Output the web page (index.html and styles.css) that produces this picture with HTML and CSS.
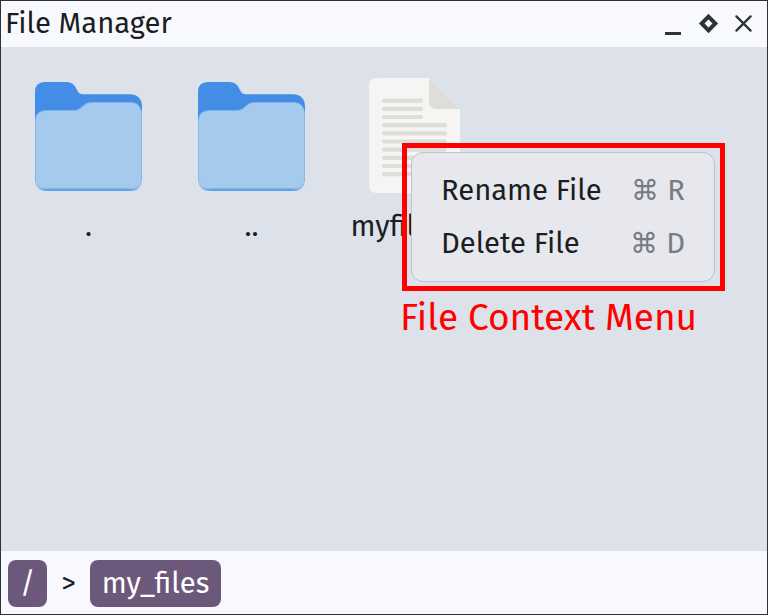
FILE: index.html
```html
<!DOCTYPE html>
<html lang="en">
<head>
<meta charset="utf-8">
<title>File Manager</title>
<link rel="stylesheet" href="styles.css">
</head>
<body>
<svg class="defs" width="0" height="0" aria-hidden="true">
  <defs>
    <linearGradient id="edge" x1="0" x2="1" y1="0" y2="0">
      <stop offset="0" stop-color="#a4caee"/><stop offset=".12" stop-color="#62a0ea"/>
      <stop offset=".88" stop-color="#62a0ea"/><stop offset="1" stop-color="#a4caee"/>
    </linearGradient>
    <symbol id="folder" viewBox="0 0 107 109">
      <path fill="#438de6" d="M10 0H31C38 0 40 4 42 8C43.500 11 45 12.300 48 12.300H95Q107 13 107 25V60H0V10Q0 0 10 0Z"/>
      <path fill="#80b3ee" d="M0 38Q1 28 11 28H39C43 28 45 26 48 23.500C51 21 53 20 57 20H97Q106 21 107 31V98Q106 109 96 109H11Q1 109 0 98Z"/>
      <path fill="url(#edge)" d="M1 90H106V98Q106 109 96 109H11Q1 109 1 98Z"/>
      <path fill="#a4caee" d="M.8 39Q1 29 11 29H39C43 29 45.500 27 48 24.600C51 22 53 21 57 21H97Q106 22 106.200 32V96Q106 106 96 106.500H11Q1 106 .8 96Z"/>
    </symbol>
  </defs>
</svg>
<main class="window">
  <header class="titlebar">
    <h1 class="title">File Manager</h1>
    <div class="controls">
      <svg width="88" height="24" viewBox="0 0 88 24" fill="none" stroke="#2e3436">
        <path stroke-width="3" d="M0 21.500H16"/>
        <path stroke-width="4" d="M43.500 4.700L50.300 11.500L43.500 18.300L36.700 11.500Z"/>
        <path stroke-width="2.300" stroke-linecap="round" d="M71.400 4.400L85.600 18.600M85.600 4.400L71.400 18.600"/>
      </svg>
    </div>
  </header>
  <section class="files">
    <div class="file"><svg class="icon" width="107" height="109"><use href="#folder"/></svg><span class="name">.</span></div>
    <div class="file"><svg class="icon" width="107" height="109"><use href="#folder"/></svg><span class="name">..</span></div>
    <div class="file">
      <svg class="icon document" width="91" height="115" viewBox="0 0 91 115">
        <path fill="#f6f5f4" d="M8 0H60L91 31V107Q91 115 83 115H8Q0 115 0 107V8Q0 0 8 0Z"/>
        <path fill="#deddda" d="M60 0L91 31H68Q60 31 60 23Z"/>
        <path stroke="#deddda" stroke-width="4.200" stroke-linecap="round" d="M15 22.700H52M15 30.800H52M15 39H52M15 47.200H76M15 55.300H76M15 63.500H76M15 71.600H76M15 79.800H76M15 88H76M15 96.200H76"/>
      </svg>
      <span class="name long">myfil</span>
    </div>
  </section>
  <footer class="path">
    <span class="crumb root">/</span>
    <span class="separator">&gt;</span>
    <span class="crumb folder">my_files</span>
  </footer>
</main>
<div class="callout">
  <div class="menu">
    <div class="item"><span class="rename">Rename File</span><span class="shortcut"><span class="command">⌘</span><span class="key">R</span></span></div>
    <div class="item"><span class="delete">Delete File</span><span class="shortcut"><span class="command">⌘</span><span class="key">D</span></span></div>
  </div>
</div>
<div class="caption">File Context Menu</div>
</body>
</html>
```

FILE: styles.css
```css
* { box-sizing: border-box; }
body {
  margin: 0;
  overflow: hidden;
  font: 29.2px/40px "Fira Sans", "Noto Sans", sans-serif;
  color: #1b1d22;
}
.defs { position: absolute; }
.window {
  width: 768px;
  height: 615px;
  border: 1px solid #303036;
  background: #dde1ea;
  display: flex;
  flex-direction: column;
}
.titlebar {
  height: 46px;
  padding: 0 14px 0 4px;
  background: #f8f9ff;
  display: flex;
  justify-content: space-between;
}
.title { margin: 3px 0 0; font: inherit; }
.controls { padding-top: 11px; }
.controls svg { display: block; }
.files {
  flex: 1;
  padding: 24px 0 0 6px;
  display: grid;
  grid-template-columns: repeat(3, 163px);
  align-content: start;
}
.file {
  display: flex;
  flex-direction: column;
  align-items: center;
}
.icon { margin: 11px 0 16px; }
.document { margin: 7px 0 14px; }
.name { white-space: nowrap; }
.long { width: 128px; }
.path {
  height: 63px;
  padding: 9px 7px;
  background: #f8f9ff;
  display: flex;
}
.crumb {
  height: 47px;
  line-height: 48px;
  border-radius: 8px;
  background: #6c587b;
  color: #fff;
  text-align: center;
}
.root { width: 39px; }
.separator { width: 43px; text-align: center; line-height: 48px; }
.folder { width: 131px; }
.callout {
  position: absolute;
  left: 402px;
  top: 143px;
  width: 323px;
  height: 148px;
  border: 5px solid #f00;
  padding: 4px;
}
.menu {
  height: 130px;
  width: 304px;
  padding: 11px 29px;
  border: 1px solid #bec3cb;
  border-radius: 12px;
  background: #e6e8ed;
}
.item {
  display: flex;
  justify-content: space-between;
  height: 53px;
  line-height: 54px;
  white-space: nowrap;
}
.shortcut { display: flex; gap: 8px; color: #777b83; }
.command { font-family: "DejaVu Sans", sans-serif; font-size: 28px; }
.caption {
  position: absolute;
  left: 400px;
  top: 293px;
  font-size: 37px;
  line-height: 50px;
  color: #f00;
  white-space: nowrap;
}
```
